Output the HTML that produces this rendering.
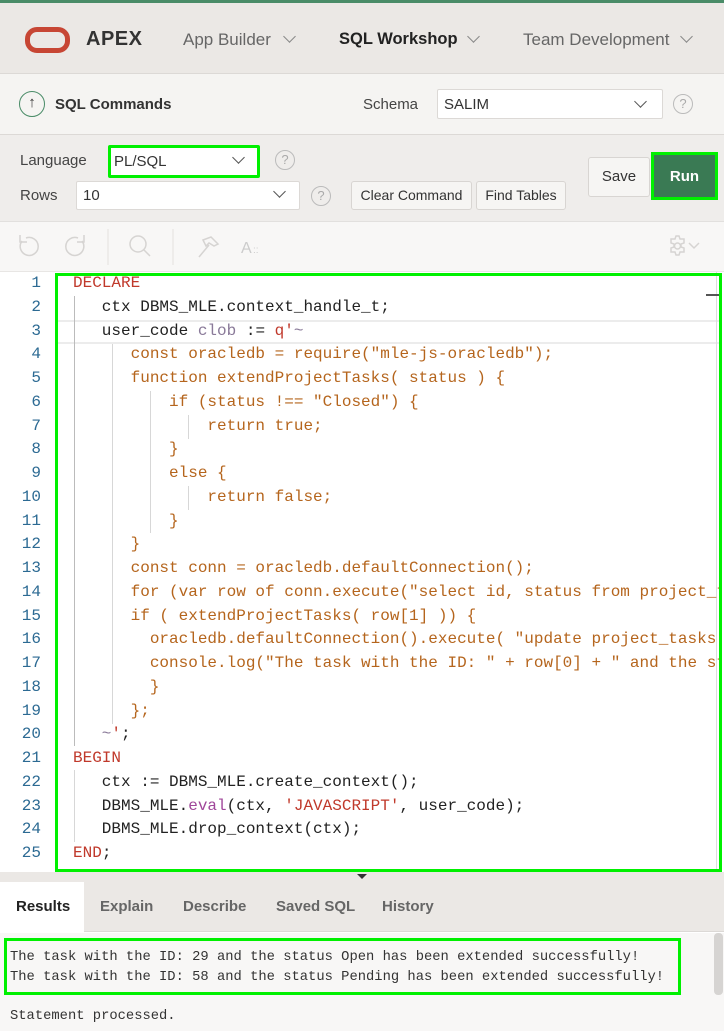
<!DOCTYPE html>
<html><head><meta charset="utf-8">
<style>
*{margin:0;padding:0;box-sizing:border-box}
html,body{width:724px;height:1031px;overflow:hidden}
body{position:relative;background:#fff;font-family:"Liberation Sans",sans-serif;color:#333}
.a{position:absolute}
.sel{position:absolute;background:#fff;border:1px solid #dcd9d6;border-radius:2px;font-size:15px;color:#333;padding-left:6px;line-height:30px}
.chev{position:absolute;width:9px;height:9px;border-right:1.5px solid #555;border-bottom:1.5px solid #555;transform:rotate(45deg)}
.help{position:absolute;width:20px;height:20px;border:1.5px solid #bbb;border-radius:50%;color:#aaa;font-size:13px;text-align:center;line-height:17px}
.btn{position:absolute;background:#f6f5f3;border:1px solid #d8d5d2;border-radius:3px;font-size:14px;color:#333;text-align:center}
.code{position:absolute;left:73px;top:0;font-family:"Liberation Mono",monospace;font-size:16px;line-height:23.75px;white-space:pre}
.ln{position:absolute;left:0;width:41px;text-align:right;color:#2c6a93;font-family:"Liberation Mono",monospace;font-size:16px;line-height:23.75px}
.k{color:#c0392b}.j{color:#b5651d}.p{color:#222}.g{color:#8a7a99}.e{color:#a0479a}
.guide{position:absolute;width:1px;background:#d7d7d7}
.tab{position:absolute;top:882px;height:50px;line-height:50px;font-size:15px;font-weight:bold;color:#666}
.out{font-family:"Liberation Mono",monospace;font-size:13.8px;color:#333}
</style></head><body>
<div class="a" style="left:0;top:0;width:724px;height:3px;background:#4a8c68"></div>
<div class="a" style="left:0;top:3px;width:724px;height:71px;background:#ebe8e5;border-bottom:1px solid #dcd9d6"></div>
<div class="a" style="left:25px;top:27px;width:45px;height:26px;border:5px solid #c74634;border-radius:12px"></div>
<div class="a" style="left:86px;top:28px;font-size:20px;font-weight:bold;color:#333;letter-spacing:0.5px">APEX</div>
<div class="a" style="left:183px;top:30px;font-size:17px;color:#666">App Builder</div>
<div class="chev" style="left:285px;top:32px;border-color:#888"></div>
<div class="a" style="left:339px;top:30px;font-size:16.5px;font-weight:bold;color:#222">SQL Workshop</div>
<div class="chev" style="left:469px;top:32px;border-color:#888"></div>
<div class="a" style="left:523px;top:30px;font-size:17px;color:#666">Team Development</div>
<div class="chev" style="left:682px;top:32px;border-color:#888"></div>
<div class="a" style="left:0;top:74px;width:724px;height:61px;background:#f5f4f2;border-bottom:1px solid #dcd9d6"></div>
<div class="a" style="left:19px;top:91px;width:26px;height:26px;border:1.5px solid #4a8c68;border-radius:50%;text-align:center;font-size:15px;line-height:22px;color:#333">↑</div>
<div class="a" style="left:55px;top:96px;font-size:15px;font-weight:bold;color:#333">SQL Commands</div>
<div class="a" style="left:363px;top:96px;font-size:15px;color:#444">Schema</div>
<div class="sel" style="left:437px;top:89px;width:226px;height:30px">SALIM</div>
<div class="chev" style="left:636px;top:97px"></div>
<div class="help" style="left:673px;top:94px">?</div>
<div class="a" style="left:0;top:135px;width:724px;height:86px;background:#efedeb"></div>
<div class="a" style="left:20px;top:152px;font-size:15px;color:#444">Language</div>
<div class="sel" style="left:108px;top:145px;width:152px;height:33px;border:3px solid #00f000;line-height:27px;padding-left:3px">PL/SQL</div>
<div class="chev" style="left:234px;top:153px"></div>
<div class="help" style="left:275px;top:150px">?</div>
<div class="a" style="left:20px;top:187px;font-size:15px;color:#444">Rows</div>
<div class="sel" style="left:76px;top:181px;width:224px;height:29px;line-height:28px">10</div>
<div class="chev" style="left:275px;top:187px"></div>
<div class="help" style="left:311px;top:186px">?</div>
<div class="btn" style="left:351px;top:181px;width:121px;height:29px;line-height:27px">Clear Command</div>
<div class="btn" style="left:476px;top:181px;width:90px;height:29px;line-height:27px">Find Tables</div>
<div class="btn" style="left:588px;top:157px;width:62px;height:40px;line-height:38px;font-size:15px">Save</div>
<div class="a" style="left:651px;top:152px;width:67px;height:48px;border:3px solid #00f000;background:#3a7a54;color:#fff;font-weight:bold;font-size:15px;text-align:center;line-height:44px">Run</div>
<div class="a" style="left:0;top:221px;width:724px;height:51px;background:#f8f7f6;border-top:1px solid #e2e0de;border-bottom:1px solid #e8e6e4"></div>
<svg class="a" style="left:0;top:221px" width="724" height="51">
<g fill="none" stroke="#d6d4d2" stroke-width="1.5">
<path d="M22 20 a9 9 0 1 0 4 -3"/><path d="M20 14 l0 7 7 0"/>
<path d="M82 20 a9 9 0 1 1 -4 -3"/><path d="M84 14 l0 7 -7 0"/>
<line x1="108" y1="8" x2="108" y2="44" stroke="#ebe9e7"/>
<circle cx="138" cy="23" r="8"/><line x1="144" y1="29" x2="150" y2="35"/>
<line x1="173" y1="8" x2="173" y2="44" stroke="#ebe9e7"/>
<path d="M199 36 l10 -12 M203 19 l8 -3 7 7 -4 2 -5 -3 -3 3z"/>
<path d="M671 18 l4 0 1 -3 3 0 1 3 4 0 0 4 -3 1 0 3 3 1 0 4 -4 0 -1 3 -3 0 -1 -3 -4 0 0 -4 3 -1 0 -3 -3 -1z"/><circle cx="677.5" cy="25" r="3"/>
<path d="M689 22 l5 5 5 -5"/>
</g>
<text x="241" y="32" font-size="16" fill="#ccc" font-family="Liberation Sans">A</text><text x="253" y="32" font-size="10" fill="#ccc" font-family="Liberation Sans">::</text>
</svg>
<div class="a" style="left:0;top:272px;width:724px;height:600px;background:#fff;overflow:hidden">
<div class="a" style="left:55px;top:48px;width:667px;height:24px;border-top:2px solid #ececec;border-bottom:2px solid #ececec"></div>
<div class="ln" style="top:0">1<br>2<br>3<br>4<br>5<br>6<br>7<br>8<br>9<br>10<br>11<br>12<br>13<br>14<br>15<br>16<br>17<br>18<br>19<br>20<br>21<br>22<br>23<br>24<br>25</div>
<div class="guide" style="left:74px;top:24px;height:450px;background:#bbb"></div>
<div class="guide" style="left:74px;top:498px;height:72px"></div>
<div class="guide" style="left:112px;top:72px;height:380px"></div>
<div class="guide" style="left:150px;top:119px;height:142px"></div>
<div class="guide" style="left:188px;top:143px;height:24px"></div>
<div class="guide" style="left:188px;top:214px;height:24px"></div>
<div class="a" style="left:716px;top:0;width:1px;height:600px;background:#ddd"></div>
<div class="a" style="left:706px;top:22px;width:14px;height:2px;background:#555"></div>
<div class="code"><span class="k">DECLARE</span>
<span class="p">   ctx DBMS_MLE.context_handle_t;</span>
<span class="p">   user_code </span><span class="g">clob</span><span class="p"> := </span><span class="k">q'</span><span class="g">~</span>
<span class="j">      const oracledb = require("mle-js-oracledb");</span>
<span class="j">      function extendProjectTasks( status ) {</span>
<span class="j">          if (status !== "Closed") {</span>
<span class="j">              return true;</span>
<span class="j">          }</span>
<span class="j">          else {</span>
<span class="j">              return false;</span>
<span class="j">          }</span>
<span class="j">      }</span>
<span class="j">      const conn = oracledb.defaultConnection();</span>
<span class="j">      for (var row of conn.execute("select id, status from project_tasks</span>
<span class="j">      if ( extendProjectTasks( row[1] )) {</span>
<span class="j">        oracledb.defaultConnection().execute( "update project_tasks set</span>
<span class="j">        console.log("The task with the ID: " + row[0] + " and the status</span>
<span class="j">        }</span>
<span class="j">      };</span>
<span class="g">   ~</span><span class="k">'</span><span class="p">;</span>
<span class="k">BEGIN</span>
<span class="p">   ctx := DBMS_MLE.create_context();</span>
<span class="p">   DBMS_MLE.</span><span class="e">eval</span><span class="p">(ctx, </span><span class="k">'JAVASCRIPT'</span><span class="p">, user_code);</span>
<span class="p">   DBMS_MLE.drop_context(ctx);</span>
<span class="k">END</span><span class="p">;</span></div>
<div class="a" style="left:720px;top:0;width:4px;height:600px;background:#fff"></div>
<div class="a" style="left:55px;top:1px;width:667px;height:599px;border:3px solid #00f000"></div>
</div>
<div class="a" style="left:0;top:872px;width:724px;height:10px;background:#ebe8e5"></div>
<div class="a" style="left:357px;top:874px;width:0;height:0;border-left:5px solid transparent;border-right:5px solid transparent;border-top:5px solid #333"></div>
<div class="a" style="left:0;top:882px;width:724px;height:50px;background:#ebe8e5;border-bottom:1px solid #dcd9d6"></div>
<div class="a" style="left:0;top:882px;width:84px;height:51px;background:#fff"></div>
<div class="tab" style="left:16px;color:#222">Results</div>
<div class="tab" style="left:100px">Explain</div>
<div class="tab" style="left:183px">Describe</div>
<div class="tab" style="left:276px">Saved SQL</div>
<div class="tab" style="left:382px">History</div>
<div class="a" style="left:0;top:933px;width:724px;height:98px;background:#f8f7f6"></div>
<div class="a" style="left:714px;top:933px;width:9px;height:62px;background:#d6d4d2;border-radius:4px"></div>
<div class="a out" style="left:4px;top:938px;width:677px;height:57px;border:3px solid #00f000;padding:7px 0 0 3px;line-height:20px;white-space:nowrap;overflow:hidden">The task with the ID: 29 and the status Open has been extended successfully!<br>The task with the ID: 58 and the status Pending has been extended successfully!</div>
<div class="a out" style="left:10px;top:1009px">Statement processed.</div>
</body></html>
